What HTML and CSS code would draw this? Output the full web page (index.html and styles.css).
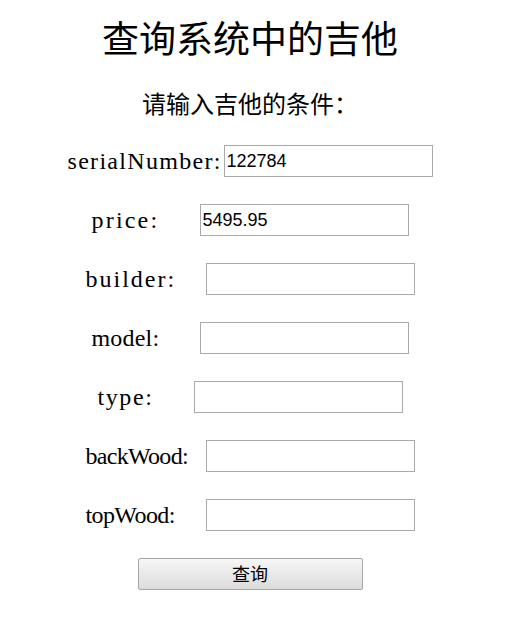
FILE: index.html
```html
<!DOCTYPE html>
<html lang="zh">
<head>
<meta charset="utf-8">
<title>查询系统中的吉他</title>
<link rel="stylesheet" href="styles.css">
</head>
<body>
<div class="page">
  <h1 class="title">查询系统中的吉他</h1>
  <p class="subtitle">请输入吉他的条件：</p>
  <form class="form">
    <div class="row"><span class="lbl lbl-serial">serialNumber:</span><input class="field" type="text" value="122784"></div>
    <div class="row"><span class="lbl lbl-price">price:</span><input class="field" type="text" value="5495.95"></div>
    <div class="row"><span class="lbl lbl-builder">builder:</span><input class="field" type="text"></div>
    <div class="row"><span class="lbl lbl-model">model:</span><input class="field" type="text"></div>
    <div class="row"><span class="lbl lbl-type">type:</span><input class="field" type="text"></div>
    <div class="row"><span class="lbl lbl-back">backWood:</span><input class="field" type="text"></div>
    <div class="row"><span class="lbl lbl-top">topWood:</span><input class="field" type="text"></div>
    <button class="btn" type="button">查询</button>
  </form>
</div>
</body>
</html>
```
FILE: styles.css
```css
html, body {
  margin: 0;
  padding: 0;
  background: #ffffff;
}
.page {
  width: 500px;
  display: flex;
  flex-direction: column;
  align-items: center;
  color: #000;
}
.title {
  margin: 19px 0 0 0;
  font-family: "Noto Sans CJK SC", sans-serif;
  font-weight: normal;
  font-size: 37px;
  line-height: 37px;
}
.subtitle {
  margin: 35px 0 0 0;
  font-family: "Noto Sans CJK SC", sans-serif;
  font-size: 24px;
  line-height: 24px;
}
.form {
  margin-top: 30px;
  display: flex;
  flex-direction: column;
  align-items: center;
  gap: 27px;
}
.row {
  display: flex;
  align-items: center;
  height: 32px;
}
.lbl {
  display: block;
  font-family: "Liberation Serif", "Times New Roman", serif;
  font-size: 24px;
  line-height: 32px;
  white-space: nowrap;
}
.lbl-serial { width: 156px; letter-spacing: 1.3px; }
.lbl-price { width: 108px; letter-spacing: 2.2px; }
.lbl-builder { width: 120px; letter-spacing: 2px; }
.lbl-model { width: 108px; letter-spacing: 0.2px; }
.lbl-type { width: 96px; letter-spacing: 1.6px; }
.lbl-back { width: 120px; letter-spacing: -0.7px; }
.lbl-top { width: 120px; letter-spacing: -0.6px; }
.field {
  box-sizing: border-box;
  width: 209px;
  height: 32px;
  margin: 0;
  padding: 1px 2px;
  border: 1px solid #a9a9a9;
  font-family: "Liberation Sans", Arial, sans-serif;
  font-size: 18px;
  color: #000;
  background: #fff;
  outline: none;
}
.btn {
  box-sizing: border-box;
  width: 225px;
  height: 32px;
  margin-top: 0;
  border: 1px solid #a6a6a6;
  border-radius: 2px;
  background: linear-gradient(#f6f6f6, #dcdcdc);
  font-family: "Noto Sans CJK SC", sans-serif;
  font-size: 18px;
  line-height: 24px;
  color: #000;
  padding: 0 0 3px 0;
}
```
